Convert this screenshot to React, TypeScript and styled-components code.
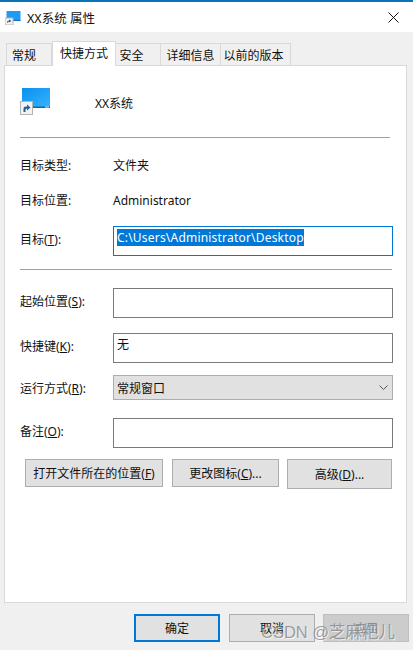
import styled, { createGlobalStyle } from 'styled-components';

const GlobalStyle = createGlobalStyle`
  html, body {
    margin: 0;
    padding: 0;
    background: #f0f0f0;
  }
  body {
    font-family: "Noto Sans", "Noto Sans CJK SC", sans-serif;
    font-size: 12px;
    color: #111;
  }
`;

const Window = styled.div`
  position: relative;
  width: 413px;
  height: 650px;
  overflow: hidden;
  background: #f0f0f0;
  border-top: 2px solid #0a74b8;
  box-sizing: border-box;
`;

const TitleBar = styled.div`
  height: 30px;
  display: flex;
  align-items: center;
  gap: 6px;
  padding: 0 14px 0 5px;
  background: #fff;
  font-size: 12.5px;
`;

const TitleText = styled.span`
  flex: 1;
  margin-top: 1px;
`;

const Tabs = styled.div`
  display: flex;
  align-items: flex-end;
  height: 25px;
  margin: 9px 0 -1px 6px;
`;

const Tab = styled.div<{ $width: number; $active?: boolean; $textShift?: number }>`
  position: relative;
  z-index: ${(p) => (p.$active ? 2 : 1)};
  box-sizing: border-box;
  width: ${(p) => p.$width}px;
  height: ${(p) => (p.$active ? 25 : 23)}px;
  display: flex;
  align-items: center;
  justify-content: center;
  padding-right: ${(p) => p.$textShift ?? 0}px;
  padding-bottom: ${(p) => (p.$active ? 2 : 0)}px;
  background: ${(p) => (p.$active ? '#fff' : '#f0f0f0')};
  border: 1px solid #d9d9d9;
  border-bottom: ${(p) => (p.$active ? 'none' : '1px solid #d9d9d9')};
  border-left: ${(p) => (p.$active ? '1px solid #d9d9d9' : 'none')};
  &:first-child {
    border-left: 1px solid #d9d9d9;
  }
`;

const Panel = styled.div`
  box-sizing: border-box;
  width: 403px;
  height: 538px;
  margin-left: 4px;
  padding: 22px 13px 0 15px;
  background: #fff;
  border: 1px solid #d9d9d9;
`;

const Header = styled.div`
  display: flex;
  align-items: center;
  height: 27px;
`;

const ShortcutName = styled.div`
  margin-left: 44px;
  padding-top: 2px;
`;

const Divider = styled.div<{ $top: number; $bottom: number; $inset?: number }>`
  height: 1px;
  background: #a0a0a0;
  margin: ${(p) => p.$top}px ${(p) => p.$inset ?? 1}px ${(p) => p.$bottom}px 0;
`;

const Row = styled.div<{ $height: number; $top?: number }>`
  display: grid;
  grid-template-columns: 93px 280px;
  align-items: center;
  height: ${(p) => p.$height}px;
  margin-top: ${(p) => p.$top ?? 0}px;
`;

const Label = styled.div<{ $raised?: boolean }>`
  padding-bottom: ${(p) => (p.$raised ? 4 : 0)}px;
  white-space: nowrap;
`;

const Value = styled.div`
  white-space: nowrap;
`;

const TextBox = styled.div<{ $focused?: boolean }>`
  box-sizing: border-box;
  height: 100%;
  padding: 2px 3px;
  line-height: 18px;
  background: #fff;
  border: 1px solid ${(p) => (p.$focused ? '#0078d7' : '#7a7a7a')};
`;

const Selected = styled.span`
  display: inline-block;
  background: #0078d7;
  color: #fff;
  line-height: 17px;
  letter-spacing: 0.2px;
  white-space: nowrap;
`;

const Select = styled.div`
  box-sizing: border-box;
  height: 100%;
  display: flex;
  align-items: center;
  justify-content: space-between;
  padding: 0 4px 0 3px;
  background: #e1e1e1;
  border: 1px solid #adadad;
`;

const ActionRow = styled.div`
  display: flex;
  align-items: flex-start;
  gap: 8px;
  margin: 11px 0 0 5px;
`;

const ActionButton = styled.div<{ $width: number; $height?: number; $spaceAfter?: number }>`
  box-sizing: border-box;
  width: ${(p) => p.$width}px;
  height: ${(p) => p.$height ?? 28}px;
  margin-right: ${(p) => p.$spaceAfter ?? 0}px;
  display: flex;
  align-items: center;
  justify-content: center;
  background: #e1e1e1;
  border: 1px solid #adadad;
  white-space: nowrap;
`;

const Footer = styled.div`
  display: flex;
  justify-content: flex-end;
  gap: 8px;
  margin: 11px 4px 0 0;
`;

const DialogButton = styled.div<{ $kind?: 'primary' | 'disabled' }>`
  box-sizing: border-box;
  width: 86px;
  height: 28px;
  margin-right: ${(p) => (p.$kind === 'primary' ? 1 : 0)}px;
  display: flex;
  align-items: center;
  justify-content: center;
  padding-bottom: 1px;
  background: ${(p) => (p.$kind === 'disabled' ? '#cccccc' : '#e1e1e1')};
  color: ${(p) => (p.$kind === 'disabled' ? '#8a8a8a' : '#111')};
  border: ${(p) =>
    p.$kind === 'primary'
      ? '2px solid #0078d7'
      : p.$kind === 'disabled'
        ? '1px solid #bfbfbf'
        : '1px solid #adadad'};
`;

const Watermark = styled.div`
  position: absolute;
  left: 261px;
  bottom: 8px;
  font-family: "Liberation Sans", "Noto Sans CJK SC", sans-serif;
  font-size: 16.5px;
  line-height: 20px;
  color: rgb(130 130 130 / 0.75);
  text-shadow: 1px 1px 0 rgb(255 255 255 / 0.6);
  white-space: nowrap;
`;

function FolderIcon({ size }: { size: 'small' | 'large' }) {
  if (size === 'small') {
    return (
      <svg width="16" height="15" viewBox="0 0 16 15">
        <rect x="1.5" y="1" width="14" height="10" fill="#1e9bf5" />
        <rect x="1.5" y="10" width="14" height="1" fill="#0a6fb5" />
        <rect x="0" y="8" width="8" height="7" fill="#f4f4f4" stroke="#b5b5b5" strokeWidth="1" />
        <path d="M2 13 L2 11.5 L4 10.5 L4 9.5 L6.5 11 L4 12.5 L4 11.5 Z" fill="#2a5f9e" />
      </svg>
    );
  }
  return (
    <svg width="31" height="27" viewBox="0 0 31 27">
      <defs>
        <linearGradient id="screen" x1="0" y1="0" x2="1" y2="1">
          <stop offset="0" stopColor="#0c8ff0" />
          <stop offset="1" stopColor="#35b4ff" />
        </linearGradient>
      </defs>
      <rect x="2" y="0" width="28" height="20" fill="url(#screen)" />
      <rect x="2" y="18.5" width="28" height="1.5" fill="#0a6aa8" />
      <rect x="25" y="18.5" width="4" height="1" fill="#cfe8f8" />
      <rect x="0.5" y="13.5" width="12" height="13" fill="#f2f2f2" stroke="#b4b4b4" />
      <path d="M3.5 24 L3.5 20.5 Q3.5 18.5 6 18.5 L7 18.5 L7 16.5 L10.5 19.5 L7 22.5 L7 20.5 Q5.5 20.5 5.5 22 L5.5 24 Z" fill="#2a5f9e" />
    </svg>
  );
}

function CloseIcon() {
  return (
    <svg width="11" height="11" viewBox="0 0 11 11">
      <path d="M0.5 0.5 L10.5 10.5 M10.5 0.5 L0.5 10.5" stroke="#111" strokeWidth="1" fill="none" />
    </svg>
  );
}

function Chevron() {
  return (
    <svg width="9" height="6" viewBox="0 0 9 6">
      <path d="M0.5 0.5 L4.5 4.5 L8.5 0.5" stroke="#555" strokeWidth="1" fill="none" />
    </svg>
  );
}

export default function App() {
  return (
    <>
      <GlobalStyle />
      <Window>
        <TitleBar>
          <FolderIcon size="small" />
          <TitleText>XX系统 属性</TitleText>
          <CloseIcon />
        </TitleBar>
        <Tabs>
          <Tab $width={46} $textShift={10}>常规</Tab>
          <Tab $width={64} $active>快捷方式</Tab>
          <Tab $width={45} $textShift={13}>安全</Tab>
          <Tab $width={60}>详细信息</Tab>
          <Tab $width={70} $textShift={4}>以前的版本</Tab>
        </Tabs>
        <Panel>
          <Header>
            <FolderIcon size="large" />
            <ShortcutName>XX系统</ShortcutName>
          </Header>
          <Divider $top={22} $bottom={17} $inset={3} />
          <Row $height={20}>
            <Label>目标类型:</Label>
            <Value>文件夹</Value>
          </Row>
          <Row $height={20} $top={15}>
            <Label>目标位置:</Label>
            <Value>Administrator</Value>
          </Row>
          <Row $height={30} $top={16}>
            <Label $raised>目标(<u>T</u>):</Label>
            <TextBox $focused>
              <Selected>C:\Users\Administrator\Desktop</Selected>
            </TextBox>
          </Row>
          <Divider $top={13} $bottom={18} />
          <Row $height={30}>
            <Label $raised>起始位置(<u>S</u>):</Label>
            <TextBox />
          </Row>
          <Row $height={30} $top={15}>
            <Label $raised>快捷键(<u>K</u>):</Label>
            <TextBox>无</TextBox>
          </Row>
          <Row $height={25} $top={12}>
            <Label>运行方式(<u>R</u>):</Label>
            <Select>
              常规窗口
              <Chevron />
            </Select>
          </Row>
          <Row $height={30} $top={18}>
            <Label $raised>备注(<u>O</u>):</Label>
            <TextBox />
          </Row>
          <ActionRow>
            <ActionButton $width={138} $spaceAfter={1}>打开文件所在的位置(<u>F</u>)</ActionButton>
            <ActionButton $width={107}>更改图标(<u>C</u>)...</ActionButton>
            <ActionButton $width={105} $height={30}>高级(<u>D</u>)...</ActionButton>
          </ActionRow>
        </Panel>
        <Footer>
          <DialogButton $kind="primary">确定</DialogButton>
          <DialogButton>取消</DialogButton>
          <DialogButton $kind="disabled">应用</DialogButton>
        </Footer>
        <Watermark>CSDN @芝麻粑儿</Watermark>
      </Window>
    </>
  );
}
